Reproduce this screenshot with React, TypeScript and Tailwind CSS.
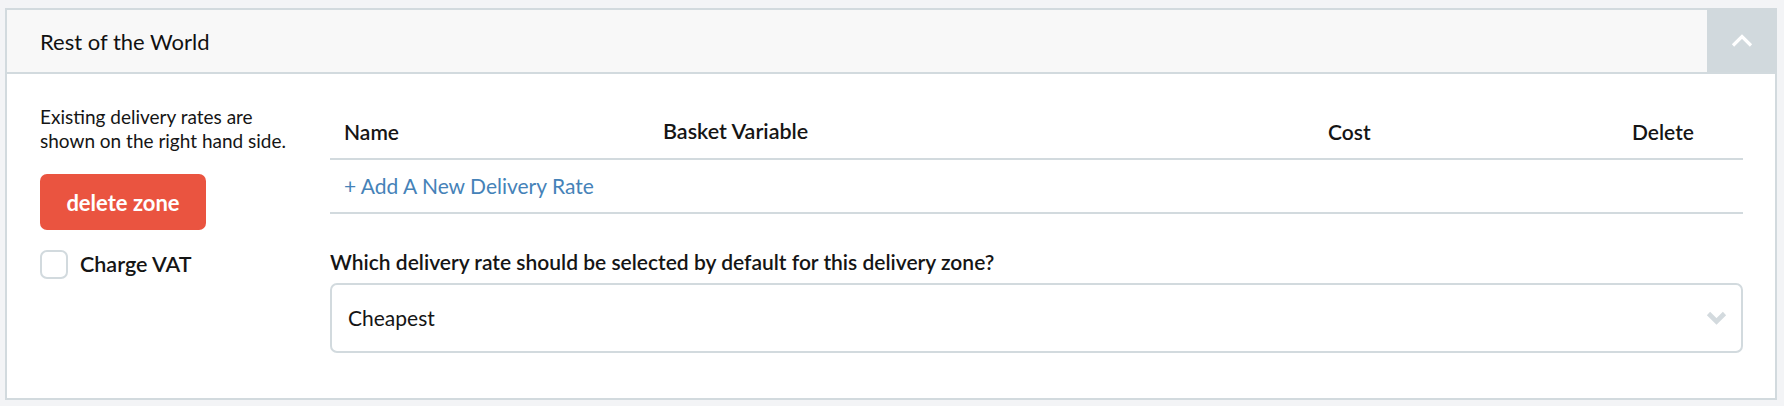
const font = { fontFamily: 'Lato, "Open Sans", Arial, sans-serif' };

function ChevronUp() {
  return (
    <svg width="22" height="13" viewBox="0 0 22 13" fill="none">
      <path d="M2 11.5 L11 2.5 L20 11.5" stroke="#ffffff" strokeWidth="3.2" />
    </svg>
  );
}

function ChevronDown() {
  return (
    <svg width="21" height="14" viewBox="0 0 21 14" fill="none">
      <path d="M2.5 2.5 L10.5 10.5 L18.5 2.5" stroke="#d3dade" strokeWidth="4.6" />
    </svg>
  );
}

export default function App() {
  return (
    <div className="min-h-[406px] bg-[#f3f4f6] pt-[8px] pl-[5px] pr-[7px] pb-[6px]" style={font}>
      <div className="border-2 border-[#d2dade] bg-white">
        <div className="flex h-[64px] border-b-2 border-[#d2dade] bg-[#f8f8f8]">
          <div className="flex flex-1 items-center pl-[33px] text-[22px] text-[#111111]">
            Rest of the World
          </div>
          <div className="-mr-[2px] -mt-[2px] flex w-[70px] items-center justify-center bg-[#d1d9dd]">
            <ChevronUp />
          </div>
        </div>

        <div className="flex pl-[33px] pr-[32px] pt-[31px] pb-[45px]">
          <div className="w-[290px] shrink-0">
            <p className="text-[19px] leading-[24px] text-[#151515]">
              Existing delivery rates are
              <br />
              shown on the right hand side.
            </p>
            <button className="mt-[21px] flex h-[56px] w-[166px] items-center justify-center rounded-[7px] bg-[#ea5440] text-[22px] font-bold text-white">
              delete zone
            </button>
            <label className="mt-[18px] flex items-center gap-[12px]">
              <span className="h-[29px] w-[28px] rounded-[7px] border-2 border-[#d2dade] bg-white" />
              <span className="text-[21.5px] font-semibold text-[#151515]">Charge VAT</span>
            </label>
          </div>

          <div className="flex-1">
            <div className="grid h-[55px] grid-cols-[319px_665px_304px_1fr] items-center border-b-2 border-[#d2dade] text-[21px] font-semibold text-[#151515]">
              <div className="pl-[14px]">Name</div>
              <div className="pl-[14px] text-[21.5px]">Basket Variable</div>
              <div className="pl-[14px]">Cost</div>
              <div className="pl-[14px]">Delete</div>
            </div>
            <div className="flex h-[54px] items-center border-b-2 border-[#d2dade] pl-[14px]">
              <a className="text-[21px] text-[#4582b8]">+ Add A New Delivery Rate</a>
            </div>
            <div className="mt-[35px] text-[21px] leading-[26px] font-semibold text-[#151515]">
              Which delivery rate should be selected by default for this delivery zone?
            </div>
            <div className="mt-[8px] flex h-[70px] items-center justify-between rounded-[7px] border-2 border-[#d2dade] pl-[16px] pr-[14px]">
              <span className="text-[21px] text-[#151515]">Cheapest</span>
              <ChevronDown />
            </div>
          </div>
        </div>
      </div>
    </div>
  );
}
